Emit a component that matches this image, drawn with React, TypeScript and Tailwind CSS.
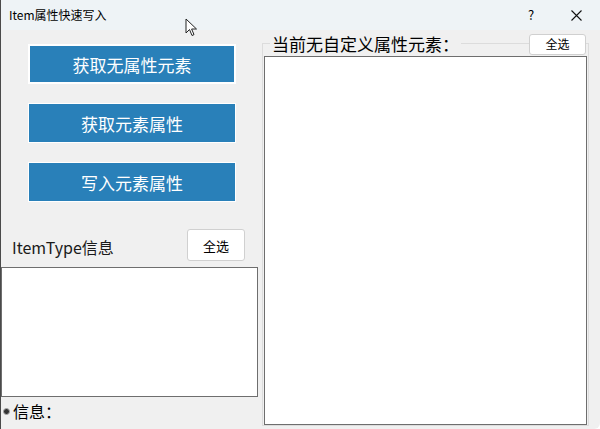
import React from "react";

const font = { fontFamily: '"Noto Sans CJK SC", "Noto Sans", sans-serif' };

function BlueButton({ label, focused }: { label: string; focused?: boolean }) {
  return (
    <button
      className={`w-[208px] h-[40px] bg-[#2980b9] text-white text-[17px] leading-none ${
        focused ? "border-2 border-white" : "border border-white"
      }`}
    >
      {label}
    </button>
  );
}

function SelectAll({ className }: { className: string }) {
  return (
    <button
      className={`bg-white border border-[#d0d0d0] rounded-[3px] text-black leading-none ${className}`}
    >
      全选
    </button>
  );
}

export default function App() {
  return (
    <div
      className="relative w-[600px] h-[429px] overflow-hidden bg-[#f0f0f0] flex flex-col border-l border-[#4a4a4a] rounded-br-[6px]"
      style={font}
    >
      {/* Title bar */}
      <div className="h-[30px] shrink-0 bg-[#eef3f6] flex items-center pl-[8px]">
        <span className="text-[12px] text-black">Item属性快速写入</span>
        <div className="ml-auto flex items-center">
          <span className="text-[13px] text-black w-[20px] text-center">?</span>
          <svg className="ml-[30px] mr-[18px]" width="11" height="11" viewBox="0 0 11 11">
            <path d="M0.5 0.5 L10.5 10.5 M10.5 0.5 L0.5 10.5" stroke="#111" strokeWidth="1.1" />
          </svg>
        </div>
      </div>

      {/* Body */}
      <div className="flex-1 flex">
        {/* Left column */}
        <div className="w-[261px] shrink-0 flex flex-col">
          <div className="flex flex-col gap-[19px] pt-[14px] pl-[27px]">
            <BlueButton label="获取无属性元素" focused />
            <BlueButton label="获取元素属性" />
            <BlueButton label="写入元素属性" />
          </div>

          <div className="flex items-center mt-[27px] pl-[11px] pr-[17px] h-[32px]">
            <span className="text-[16px] text-[#1a1a1a] mt-[4px]">ItemType信息</span>
            <SelectAll className="ml-auto w-[58px] h-[32px] text-[13px]" />
          </div>

          <div className="mt-[6px] w-[257px] h-[130px] bg-white border border-[#6e6e6e]" />

          <div className="flex items-center mt-[3px] h-[22px]">
            <span className="w-[7px] h-[7px] ml-[2px] rounded-full bg-[#333] border border-[#aaa]" />
            <span className="ml-[3px] text-[16px] text-black">信息：</span>
          </div>
        </div>

        {/* Right group box */}
        <div className="flex-1 pt-[13px] pr-[11px] pb-[3px]">
          <div className="relative h-full border border-[#dcdcdc] pt-[12px] px-[1px] pb-0">
            <div className="absolute -top-[11px] left-[7px] right-[2px] flex items-center">
              <span className="bg-[#f0f0f0] px-[2px] text-[17px] leading-[22px] text-black">
                当前无自定义属性元素：
              </span>
              <SelectAll className="ml-auto w-[57px] h-[21px] text-[12px]" />
            </div>
            <div className="h-full bg-white border border-[#6e6e6e]" />
          </div>
        </div>
      </div>

      {/* Mouse cursor */}
      <svg className="absolute left-[184px] top-[18px]" width="13" height="19" viewBox="0 0 13 19">
        <path
          d="M1 1 L1 15 L4.5 11.5 L7 17.5 L9 16.6 L6.6 11 L11.5 11 Z"
          fill="white"
          stroke="#222"
          strokeWidth="1"
          strokeLinejoin="round"
        />
      </svg>
    </div>
  );
}
